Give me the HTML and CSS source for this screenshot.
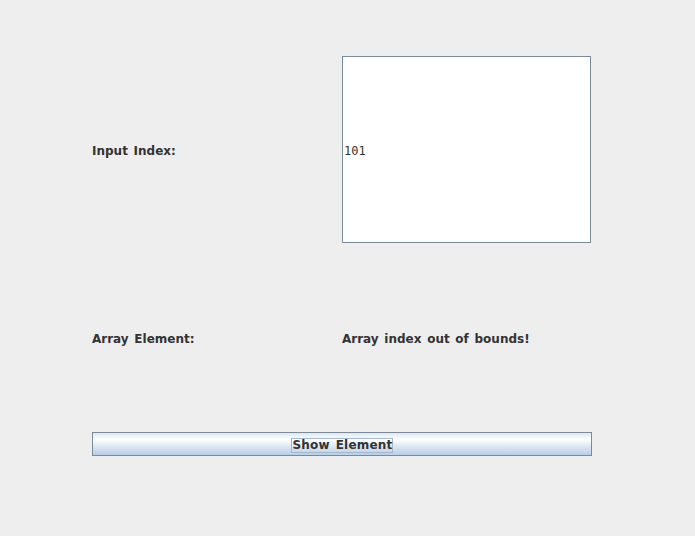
FILE: index.html
```html
<!DOCTYPE html>
<html>
<head>
<meta charset="utf-8">
<link rel="stylesheet" href="styles.css">
</head>
<body>
<div class="panel">
  <div class="label">Input Index:</div>
  <div class="field"><span class="value">101</span></div>
  <div class="label">Array Element:</div>
  <div class="label">Array index out of bounds!</div>
  <button class="btn"><span class="focus">Show Element</span></button>
</div>
</body>
</html>
```
FILE: styles.css
```css
html, body {
  margin: 0;
  padding: 0;
  background: #eeeeee;
  width: 695px;
  height: 536px;
  overflow: hidden;
}
.panel {
  display: grid;
  grid-template-columns: 250px 250px;
  grid-template-rows: 187px 189px 24px;
  padding: 56px 0 0 92px;
  font-family: "DejaVu Sans", sans-serif;
  font-size: 12px;
  font-weight: bold;
  color: #333333;
  word-spacing: 1.5px;
}
.label {
  display: flex;
  align-items: center;
  white-space: nowrap;
  padding-top: 2px;
}
.field {
  width: 249px;
  box-sizing: border-box;
  border: 1px solid #7a8a99;
  background: #ffffff;
  display: flex;
  align-items: center;
  padding-left: 1px;
  padding-top: 2px;
}
.value {
  font-family: "DejaVu Sans Mono", monospace;
  font-weight: normal;
  font-size: 12px;
  color: #333333;
  word-spacing: 0;
}
.btn {
  grid-column: 1 / 3;
  margin: 0;
  width: 500px;
  height: 24px;
  box-sizing: border-box;
  border: 1px solid #7a8a99;
  background: linear-gradient(to bottom, #dde8f3 0%, #ffffff 30%, #dde8f3 60%, #b8cfe5 100%);
  display: flex;
  align-items: center;
  justify-content: center;
  padding: 2px 0 0 0;
  font-family: "DejaVu Sans", sans-serif;
  font-size: 12px;
  font-weight: bold;
  color: #333333;
  word-spacing: 1.5px;
  letter-spacing: 0.2px;
}
.focus {
  border: 1px solid #a3b8cc;
  padding: 0 0 0 1px;
  line-height: 13px;
}
```
